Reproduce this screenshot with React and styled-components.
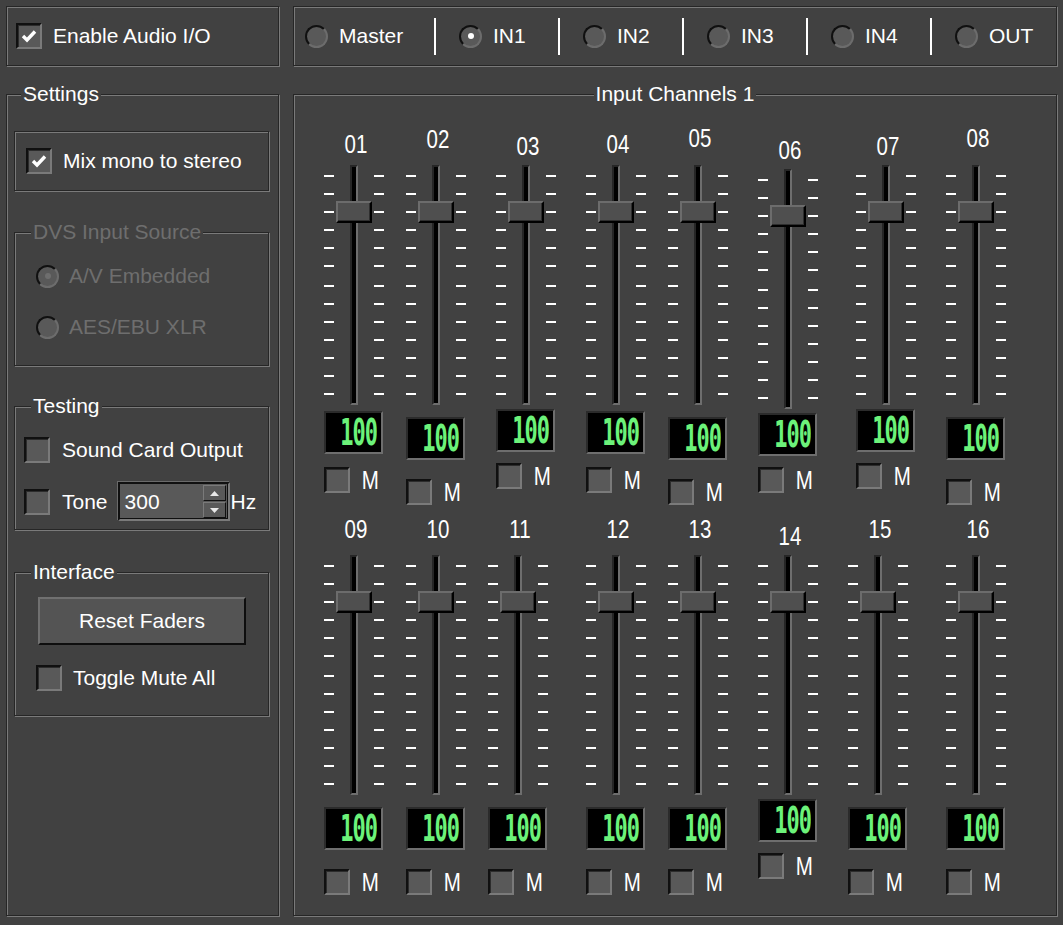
import React from "react";
import styled, { createGlobalStyle, css } from "styled-components";

const C = {
  bg: "#414141",
  dark: "#262626",
  light: "#7a7a7a",
  well: "#595959",
  face: "#545454",
  dim: "#6e6e6e",
  lcd: "#6cf27a",
};

const GlobalStyle = createGlobalStyle`
  * {
    margin: 0;
    padding: 0;
    box-sizing: border-box;
  }

  html, body {
    background-color: ${C.bg};
  }

  body {
    font-family: "Liberation Sans", Arial, sans-serif;
    font-size: 21px;
    color: #fff;
  }
`;

const etched = css`
  border: 1px solid ${C.dark};
  box-shadow: inset 1px 1px 0 ${C.light}, 1px 1px 0 ${C.light};
`;

const Screen = styled.div`
  width: 1063px;
  height: 925px;
  padding: 6px 6px 0 6px;
  display: grid;
  grid-template-columns: 273px 764px;
  grid-template-rows: 60px 833px;
  column-gap: 14px;
  row-gap: 17px;
`;

const Panel = styled.div`
  ${etched};
  display: flex;
  align-items: center;
  padding-left: ${(p) => p.$pad || 0}px;
`;

const Group = styled.fieldset`
  ${etched};
  min-width: 0;
  padding: 0;
  height: ${(p) => p.$h}px;
  margin-top: ${(p) => p.$mt || 0}px;
`;

const Legend = styled.legend`
  margin-left: ${(p) => (p.$center ? "auto" : `${p.$indent}px`)};
  margin-right: ${(p) => (p.$center ? "auto" : "0")};
  padding: 0 2px;
  line-height: 22px;
  background-color: ${C.bg};
  color: ${(p) => (p.$disabled ? C.dim : "#fff")};
`;

const GroupBody = styled.div`
  display: flex;
  flex-direction: column;
  padding: ${(p) => p.$pad};
`;

const Row = styled.div`
  display: flex;
  align-items: center;
  gap: ${(p) => p.$gap ?? 11}px;
  margin-top: ${(p) => p.$mt || 0}px;
  color: ${(p) => (p.$disabled ? C.dim : "#fff")};
  white-space: nowrap;
`;

const Box = styled.span`
  flex: none;
  width: 26px;
  height: 26px;
  background-color: ${C.well};
  border: 2px solid;
  border-color: #101010 ${C.light} ${C.light} #101010;
  box-shadow: inset 1px 1px 0 #2c2c2c;
  display: flex;
  align-items: center;
  justify-content: center;
`;

const RadioRing = styled.span`
  flex: none;
  width: 23px;
  height: 23px;
  border-radius: 50%;
  background-color: ${C.well};
  border: 2px solid;
  border-color: #101010 #6c6c6c #6c6c6c #101010;
  display: flex;
  align-items: center;
  justify-content: center;
`;

const Dot = styled.span`
  width: 6px;
  height: 6px;
  border-radius: 50%;
  background-color: ${(p) => p.$color};
`;

const Check = ({ checked }) => (
  <Box>
    {checked && (
      <svg width="16" height="14" viewBox="0 0 16 14">
        <path d="M2 7 L6 11 L14 2.5" fill="none" stroke="#fff" strokeWidth="3.4" />
      </svg>
    )}
  </Box>
);

const Radio = ({ on, disabled }) => (
  <RadioRing>{on && <Dot $color={disabled ? C.dim : "#fff"} />}</RadioRing>
);

const InsetBox = styled.div`
  ${etched};
  height: 60px;
  display: flex;
  align-items: center;
  gap: 11px;
  padding-left: 11px;
`;

const Spin = styled.div`
  margin-left: -2px;
  width: 112px;
  height: 39px;
  background-color: ${C.well};
  border: 2px solid;
  border-color: #101010 ${C.light} ${C.light} #101010;
  box-shadow: inset -1px -1px 0 #101010, -1px -1px 0 #6a6a6a;
  display: flex;
  align-items: center;
  justify-content: space-between;
  padding: 0 2px 0 5px;
`;

const SpinButtons = styled.div`
  display: flex;
  flex-direction: column;
  gap: 1px;
`;

const SpinBtn = styled.span`
  width: 23px;
  height: 16px;
  background-color: ${C.well};
  border: 1px solid;
  border-color: ${C.light} #101010 #101010 ${C.light};
  display: flex;
  align-items: center;
  justify-content: center;
`;

const Unit = styled.span`
  margin-left: -11px;
`;

const Button = styled.button`
  margin-left: 2px;
  width: 208px;
  height: 48px;
  font: inherit;
  color: #fff;
  background-color: ${C.face};
  border: 2px solid;
  border-color: #707070 #0e0e0e #0e0e0e #707070;
`;

const Tab = styled.div`
  width: ${(p) => p.$w}px;
  padding-left: ${(p) => p.$pl}px;
  display: flex;
  align-items: center;
  gap: 11px;
`;

const TabSep = styled.span`
  width: 2px;
  height: 37px;
  background-color: #fff;
`;

const Rows = styled.div`
  padding: 15px 0 0 30px;
  display: flex;
  flex-direction: column;
`;

const ChannelRow = styled.div`
  height: 390px;
  display: flex;
  align-items: flex-start;
`;

const Strip = styled.div`
  flex: none;
  width: 60px;
  margin-left: ${(p) => p.$gap}px;
  display: flex;
  flex-direction: column;
`;

const narrow = css`
  font-size: 25px;
  line-height: 25px;
  display: inline-block;
  transform: scaleX(0.82);
`;

const ChLabel = styled.div`
  margin-top: ${(p) => p.$mt}px;
  height: 25px;
  text-align: center;
  padding-left: 4px;

  span {
    ${narrow};
  }
`;

const Fader = styled.div`
  margin-top: ${(p) => p.$mt}px;
  height: 240px;
  display: grid;

  & > * {
    grid-area: 1 / 1;
  }
`;

const Track = styled.div`
  justify-self: center;
  width: 8px;
  height: 240px;
  background-color: #000;
  border: 2px solid;
  border-color: #262626 #6e6e6e #6e6e6e #262626;
`;

const Thumb = styled.div`
  justify-self: center;
  align-self: start;
  margin-top: 36px;
  width: 36px;
  height: 22px;
  background-color: #4f4f4f;
  border: 2px solid;
  border-color: #6c6c6c #000 #000 #6c6c6c;
  box-shadow: inset -1px -1px 0 #2e2e2e;
`;

const Lcd = styled.div`
  margin-top: ${(p) => p.$mt}px;
  width: 59px;
  height: 43px;
  background-color: #000;
  border: 2px solid;
  border-color: #2b2b2b #6e6e6e #6e6e6e #2b2b2b;
  display: flex;
  align-items: center;
  justify-content: flex-end;
  padding-right: 4px;
  overflow: hidden;
`;

const LcdDigits = styled.span`
  font-family: "DejaVu Sans Mono", monospace;
  font-weight: bold;
  font-size: 22px;
  line-height: 1;
  letter-spacing: -1px;
  color: ${C.lcd};
  display: inline-block;
  transform: scaleY(1.7);
`;

const Mute = styled.div`
  margin-top: ${(p) => p.$mt}px;
  display: flex;
  align-items: center;
  gap: 10px;
`;

const MLabel = styled.span`
  ${narrow};
`;

const TICKS = [11, 29, 47, 65, 83, 101, 121, 139, 157, 175, 193, 211, 229];

const Scale = () => (
  <svg width="60" height="240" shapeRendering="crispEdges">
    {TICKS.map((y) => (
      <g key={y} fill="#fff">
        <rect x="0" y={y - 1} width="10" height="2" />
        <rect x="50" y={y - 1} width="10" height="2" />
      </g>
    ))}
  </svg>
);

// label cap top, fader top, display top, mute top, gap before
const ROW1 = [
  ["01", 135, 165, 411, 467, 0],
  ["02", 130, 165, 417, 479, 22],
  ["03", 137, 165, 409, 463, 30],
  ["04", 135, 165, 411, 467, 30],
  ["05", 129, 165, 417, 479, 22],
  ["06", 141, 169, 413, 467, 30],
  ["07", 137, 165, 409, 463, 38],
  ["08", 129, 165, 417, 479, 30],
];

const ROW2 = [
  ["09", 520, 555, 807, 869, 0],
  ["10", 520, 555, 807, 869, 22],
  ["11", 520, 555, 807, 869, 22],
  ["12", 520, 555, 807, 869, 38],
  ["13", 520, 555, 807, 869, 22],
  ["14", 527, 555, 799, 853, 30],
  ["15", 520, 555, 807, 869, 30],
  ["16", 520, 555, 807, 869, 38],
];

const Channel = ({ data, rowTop }) => {
  const [name, lab, fad, disp, mute, gap] = data;
  const labTop = lab - 3;
  return (
    <Strip $gap={gap}>
      <ChLabel $mt={labTop - rowTop}>
        <span>{name}</span>
      </ChLabel>
      <Fader $mt={fad - (labTop + 25)}>
        <Scale />
        <Track />
        <Thumb />
      </Fader>
      <Lcd $mt={disp - (fad + 240)}>
        <LcdDigits>100</LcdDigits>
      </Lcd>
      <Mute $mt={mute - (disp + 43)}>
        <Check />
        <MLabel>M</MLabel>
      </Mute>
    </Strip>
  );
};

const TABS = ["Master", "IN1", "IN2", "IN3", "IN4", "OUT"];

const Arrow = ({ up }) => (
  <svg width="9" height="5" viewBox="0 0 9 5">
    <polygon points={up ? "4.5,0 9,5 0,5" : "0,0 9,0 4.5,5"} fill="#e8e8e8" />
  </svg>
);

const App = () => {
  return (
    <>
      <GlobalStyle />
      <Screen>
        <Panel $pad={9}>
          <Row>
            <Check checked />
            <span>Enable Audio I/O</span>
          </Row>
        </Panel>

        <Panel $pad={11}>
          {TABS.map((t, i) => (
            <React.Fragment key={t}>
              {i > 0 && <TabSep />}
              <Tab $w={i === 0 ? 129 : 122} $pl={i === 0 ? 0 : 23}>
                <Radio on={t === "IN1"} />
                <span>{t}</span>
              </Tab>
            </React.Fragment>
          ))}
        </Panel>

        <Group>
          <Legend $indent={14}>Settings</Legend>
          <GroupBody $pad="26px 9px 0 7px">
            <InsetBox>
              <Check checked />
              <span>Mix mono to stereo</span>
            </InsetBox>

            <Group $h={145} $mt={30}>
              <Legend $indent={16} $disabled>
                DVS Input Source
              </Legend>
              <GroupBody $pad="21px 0 0 21px">
                <Row $gap={10} $disabled>
                  <Radio on disabled />
                  <span>A/V Embedded</span>
                </Row>
                <Row $gap={10} $mt={27} $disabled>
                  <Radio />
                  <span>AES/EBU XLR</span>
                </Row>
              </GroupBody>
            </Group>

            <Group $h={135} $mt={29}>
              <Legend $indent={16}>Testing</Legend>
              <GroupBody $pad="20px 0 0 9px">
                <Row $gap={12}>
                  <Check />
                  <span>Sound Card Output</span>
                </Row>
                <Row $gap={12} $mt={19}>
                  <Check />
                  <span>Tone</span>
                  <Spin>
                    <span>300</span>
                    <SpinButtons>
                      <SpinBtn>
                        <Arrow up />
                      </SpinBtn>
                      <SpinBtn>
                        <Arrow />
                      </SpinBtn>
                    </SpinButtons>
                  </Spin>
                  <Unit>Hz</Unit>
                </Row>
              </GroupBody>
            </Group>

            <Group $h={155} $mt={31}>
              <Legend $indent={16}>Interface</Legend>
              <GroupBody $pad="14px 0 0 21px">
                <Button>Reset Faders</Button>
                <Row $mt={20}>
                  <Check />
                  <span>Toggle Mute All</span>
                </Row>
              </GroupBody>
            </Group>
          </GroupBody>
        </Group>

        <Group>
          <Legend $center>Input Channels 1</Legend>
          <Rows>
            <ChannelRow>
              {ROW1.map((d) => (
                <Channel key={d[0]} data={d} rowTop={120} />
              ))}
            </ChannelRow>
            <ChannelRow>
              {ROW2.map((d) => (
                <Channel key={d[0]} data={d} rowTop={510} />
              ))}
            </ChannelRow>
          </Rows>
        </Group>
      </Screen>
    </>
  );
};

export default App;
